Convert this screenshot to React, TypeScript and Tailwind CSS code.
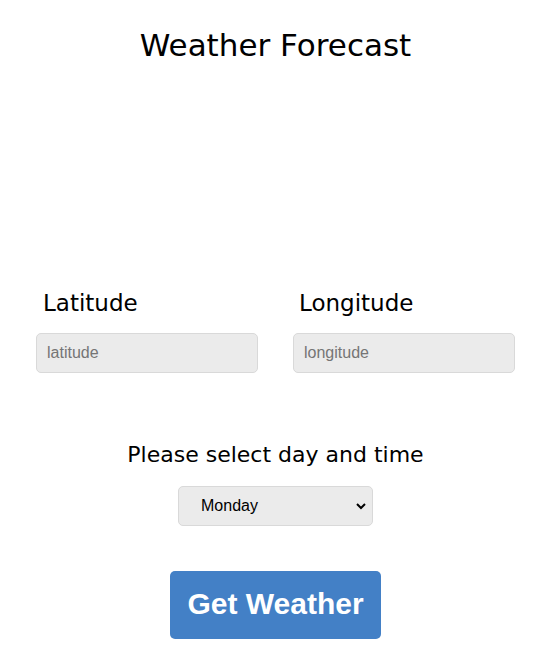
export default function App() {
  const heading = "font-['DejaVu_Sans',sans-serif] font-normal text-black";
  return (
    <div className="min-h-[658px] w-full bg-white font-['Liberation_Sans',Arial,sans-serif]">
      <h1 className={`${heading} pt-[26px] text-center text-[31px] leading-[38px]`}>
        Weather Forecast
      </h1>

      <div className="mt-[225px] grid grid-cols-2 gap-[35px] px-[36px]">
        <div className="flex flex-col">
          <label className={`${heading} pl-[7px] text-[23px] leading-[28px]`}>Latitude</label>
          <input
            placeholder="latitude"
            className="mt-[16px] h-[40px] rounded-[5px] border border-[#d9d9d9] bg-[#ebebeb] px-[10px] text-[16px] text-black placeholder:text-[#757575]"
          />
        </div>
        <div className="flex flex-col">
          <label className={`${heading} pl-[6px] text-[23px] leading-[28px]`}>Longitude</label>
          <input
            placeholder="longitude"
            className="mt-[16px] h-[40px] rounded-[5px] border border-[#d9d9d9] bg-[#ebebeb] px-[10px] text-[16px] text-black placeholder:text-[#757575]"
          />
        </div>
      </div>

      <div className="mt-[68px] flex flex-col items-center">
        <p className={`${heading} text-[22px] leading-[28px]`}>Please select day and time</p>
        <div className="relative mt-[17px] h-[40px] w-[195px]">
          <select className="h-full w-full appearance-none rounded-[5px] border border-[#d9d9d9] bg-[#ebebeb] pl-[22px] text-[16px] text-black">
            <option>Monday</option>
            <option>Tuesday</option>
            <option>Wednesday</option>
            <option>Thursday</option>
            <option>Friday</option>
            <option>Saturday</option>
            <option>Sunday</option>
          </select>
          <svg
            className="pointer-events-none absolute right-[7px] top-[16px]"
            width="10"
            height="8"
            viewBox="0 0 10 8"
          >
            <path d="M1 2l4 4 4-4" fill="none" stroke="#000" strokeWidth="2" />
          </svg>
        </div>
        <button className="mt-[45px] h-[68px] w-[211px] rounded-[5px] bg-[#4380c6] pb-[3px] text-[30px] font-bold text-white">
          Get Weather
        </button>
      </div>
    </div>
  );
}
